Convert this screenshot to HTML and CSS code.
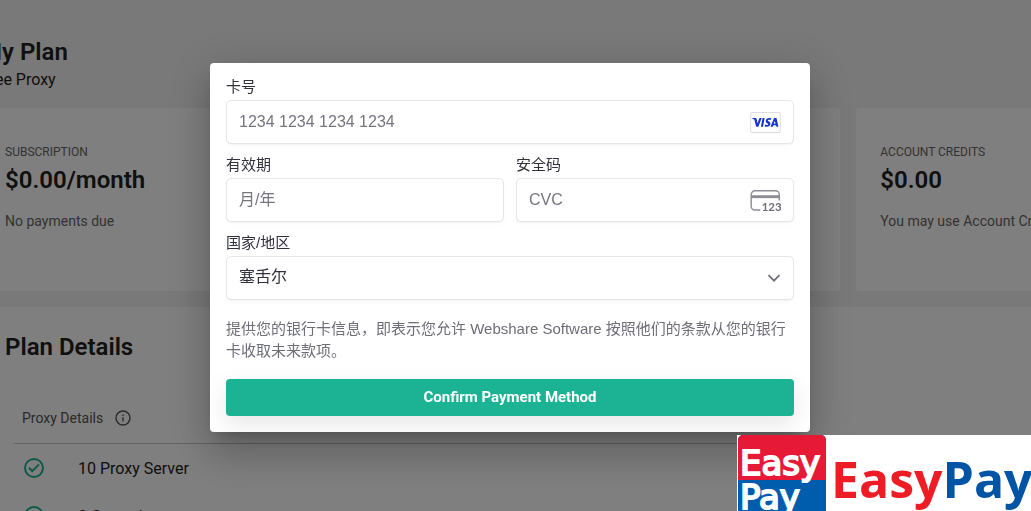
FILE: index.html
```html
<!DOCTYPE html>
<html lang="zh-CN">
<head>
<meta charset="utf-8">
<meta name="viewport" content="width=device-width, initial-scale=1">
<title>My Plan</title>
<link rel="stylesheet" href="styles.css">
</head>
<body>
<main class="page">
  <header class="page-header">
    <h1 class="heading">My Plan</h1>
    <p class="plan-name">Free Proxy</p>
  </header>
  <section class="cards">
    <article class="card">
      <h2 class="card-label">SUBSCRIPTION</h2>
      <p class="heading">$0.00/month</p>
      <p class="card-note">No payments due</p>
    </article>
    <article class="card"></article>
    <article class="card">
      <h2 class="card-label">ACCOUNT CREDITS</h2>
      <p class="heading">$0.00</p>
      <p class="card-note">You may use Account Credits</p>
    </article>
  </section>
  <section class="details">
    <h2 class="heading">Plan Details</h2>
    <div class="details-body">
      <div class="details-head">
        <span>Proxy Details</span>
        <svg class="info-icon" viewBox="0 0 16 16" aria-hidden="true"><circle cx="8" cy="8" r="7"/><path d="M8 7.200v4.300M8 4.400v1.500"/></svg>
      </div>
      <ul class="features">
        <li class="feature"><svg class="check-icon" viewBox="0 0 20 20" aria-hidden="true"><circle cx="10" cy="10" r="9"/><path d="M5 9.800l3.300 3.300 6.700-6.700"/></svg>10 Proxy Server</li>
        <li class="feature"><svg class="check-icon" viewBox="0 0 20 20" aria-hidden="true"><circle cx="10" cy="10" r="9"/><path d="M5 9.800l3.300 3.300 6.700-6.700"/></svg>3 Countries</li>
      </ul>
    </div>
  </section>
</main>

<div class="overlay">
  <form class="dialog" role="dialog" aria-label="Confirm Payment Method">
    <div class="fields">
      <div class="field field-wide">
        <label class="label" for="number">卡号</label>
        <div class="control">
          <input class="input" id="number" type="text" placeholder="1234 1234 1234 1234">
          <svg class="brand-icon" viewBox="0 0 32 22" role="img" aria-label="Visa">
            <rect x=".5" y=".5" width="31" height="21" rx="1.5" fill="#fff" stroke="#d9d9de"/>
            <path fill="#1434cb" d="M2 6.4h3.500c.6 0 1 .3 1.200.9l.9 4.500 2.100-5.400H12L8.500 15.400H6.200L4.400 8.300C4.300 7.700 3.300 7 2 6.700zM12.900 6.400h2.200L13.400 15.400h-2.200zM22 6.700l-.4 1.800c-1.500-.6-3.200-.5-3.200.4 0 .8 2.800 1 2.800 3.500 0 2.800-3.400 3.700-6 2.700l.4-1.900c1.500.8 3.300.6 3.300-.4 0-.9-2.700-1-2.700-3.400 0-2.800 3.300-3.700 5.800-2.700zM25.500 6.400h2l2 9h-2.100l-.3-1.400h-2.800l-.6 1.400h-2.400l3.300-8.200c.2-.5.500-.8.900-.8zm.3 2.700-1.200 3.200h1.900z"/>
          </svg>
        </div>
      </div>
      <div class="field">
        <label class="label" for="expiry">有效期</label>
        <div class="control"><input class="input" id="expiry" type="text" placeholder="月/年"></div>
      </div>
      <div class="field">
        <label class="label" for="cvc">安全码</label>
        <div class="control">
          <input class="input" id="cvc" type="text" placeholder="CVC">
          <svg class="brand-icon" viewBox="0 0 32 22" aria-hidden="true">
            <path fill="none" stroke="#8d8c96" stroke-width="1.500" d="M10.500 21H5a4 4 0 0 1-4-4V4.800a4 4 0 0 1 4-4h21.500a4 4 0 0 1 4 4V11"/>
            <path fill="#8d8c96" d="M1 5.500h29.500v3H1z"/>
            <text class="cvc-digits" x="12" y="22">123</text>
          </svg>
        </div>
      </div>
      <div class="field field-wide">
        <label class="label" for="country">国家/地区</label>
        <div class="control">
          <select class="input" id="country"><option>塞舌尔</option></select>
          <svg class="chevron" viewBox="0 0 14 8" aria-hidden="true"><path d="M1.500 1.200 7 6.700l5.500-5.500"/></svg>
        </div>
      </div>
    </div>
    <p class="terms">提供您的银行卡信息，即表示您允许 Webshare Software 按照他们的条款从您的银行卡收取未来款项。</p>
    <button class="confirm" type="submit">Confirm Payment Method</button>
  </form>
</div>

<div class="badge">
  <svg class="badge-mark" viewBox="0 0 88 88" role="img" aria-label="Easy Pay">
    <rect width="88" height="88" rx="5" fill="#005cad"/>
    <path d="M0 45V5a5 5 0 0 1 5-5h78a5 5 0 0 1 5 5v40z" fill="#e61937"/>
    <text class="mark-text" x="2" y="40">Easy</text>
    <text class="mark-text" x="2" y="74">Pay</text>
  </svg>
  <span class="badge-name"><span class="red">Easy</span><span class="blue">Pay</span></span>
</div>
</body>
</html>
```
FILE: styles.css
```css
* { box-sizing: border-box; }

html, body { height: 100%; }

body {
  margin: 0;
  overflow: hidden;
  background: #f2f2f2;
  color: #212121;
  font-family: Roboto, sans-serif;
}

h1, h2, p, ul { margin: 0; padding: 0; }

.page {
  width: calc(100% + 266px);
  margin-left: -19px;
}

.page-header { padding: 36px 0 16px; }

.heading {
  font-size: 24px;
  font-weight: 600;
  line-height: 32px;
}

.plan-name { font-size: 16px; line-height: 24px; }

.cards {
  display: grid;
  grid-template-columns: repeat(3, 1fr);
  gap: 16px;
  margin-bottom: 16px;
}

.card {
  min-height: 183px;
  padding: 36px 24px;
  background: #fff;
  border-radius: 4px;
}

.card-label {
  color: #666;
  font-size: 12px;
  font-weight: 400;
  line-height: 16px;
  margin-bottom: 4px;
}

.card-note {
  color: #666;
  font-size: 14px;
  line-height: 20px;
  margin-top: 15px;
}

.details {
  padding: 24px;
  background: #fff;
  border-radius: 4px;
}

.details-body { padding: 40px 9px 0; }

.details-head {
  display: flex;
  align-items: center;
  gap: 12px;
  height: 41px;
  padding: 0 8px 10px;
  border-bottom: 1px solid #c4c4c4;
  color: #555;
  font-size: 14px;
}

.info-icon {
  width: 16px;
  height: 16px;
  fill: none;
  stroke: #555;
  stroke-width: 1.4;
}

.features { list-style: none; }

.feature {
  display: flex;
  align-items: center;
  gap: 34px;
  height: 48px;
  padding: 0 10px;
  font-size: 16px;
}

.check-icon {
  width: 20px;
  height: 20px;
  fill: none;
  stroke: #1cb394;
  stroke-width: 2;
}

.overlay {
  position: fixed;
  inset: 0;
  padding: 63px 27px 0 16px;
  background: rgba(0, 0, 0, 0.5);
}

.dialog {
  max-width: 600px;
  margin: 0 auto;
  padding: 15px 16px 16px;
  background: #fff;
  border-radius: 4px;
  box-shadow: 0 11px 15px -7px rgba(0, 0, 0, 0.2), 0 24px 38px 3px rgba(0, 0, 0, 0.14), 0 9px 46px 8px rgba(0, 0, 0, 0.12);
  font-family: "Liberation Sans", "Noto Sans CJK SC", sans-serif;
}

.fields {
  display: grid;
  grid-template-columns: 1fr 1fr;
  gap: 12px;
}

.field-wide { grid-column: 1 / -1; }

.label {
  display: block;
  margin-bottom: 4px;
  color: #30313d;
  font-size: 15px;
  line-height: 18px;
}

.control {
  display: flex;
  align-items: center;
  height: 44px;
  padding: 0 12px;
  background: #fff;
  border: 1px solid #e6e6e6;
  border-radius: 5px;
  box-shadow: 0 1px 1px rgba(0, 0, 0, 0.03), 0 3px 6px rgba(0, 0, 0, 0.02);
}

.input {
  flex: 1;
  min-width: 0;
  height: 42px;
  padding: 0;
  appearance: none;
  background: none;
  border: 0;
  outline: 0;
  color: #30313d;
  font-family: inherit;
  font-size: 16px;
}

select.input { padding-bottom: 3px; }

.input::placeholder { color: #757680; opacity: 1; }

.brand-icon { width: 31px; height: 21px; }

.cvc-digits {
  fill: #6d6e78;
  font-family: Lato, sans-serif;
  font-size: 12px;
  font-weight: 700;
}

.chevron {
  width: 14px;
  height: 8px;
  fill: none;
  stroke: #6d6e78;
  stroke-width: 1.7;
}

.terms {
  margin: 18px 0 17px;
  color: #6d6e78;
  font-size: 15px;
  line-height: 22px;
}

.confirm {
  display: block;
  width: 100%;
  height: 37px;
  padding: 0 0 2px;
  background: #1cb394;
  border: 0;
  border-radius: 4px;
  box-shadow: 0 8px 24px rgba(0, 0, 0, 0.1);
  color: #fff;
  font-family: Roboto, sans-serif;
  font-size: 15px;
  font-weight: 700;
}

.badge {
  position: fixed;
  right: 0;
  bottom: 0;
  display: flex;
  gap: 5px;
  width: 294px;
  height: 76px;
  padding-left: 1px;
  overflow: hidden;
  background: #fff;
}

.badge-mark { flex: none; width: 88px; height: 88px; }

.mark-text {
  fill: #fff;
  stroke: #fff;
  stroke-width: 2;
  font-family: "DejaVu Sans", sans-serif;
  font-size: 34px;
}

.badge-name {
  font-family: "Open Sans", sans-serif;
  font-size: 50px;
  font-weight: 700;
  line-height: 88px;
}

.red { color: #ee1c25; }
.blue { color: #0054a6; }
```
